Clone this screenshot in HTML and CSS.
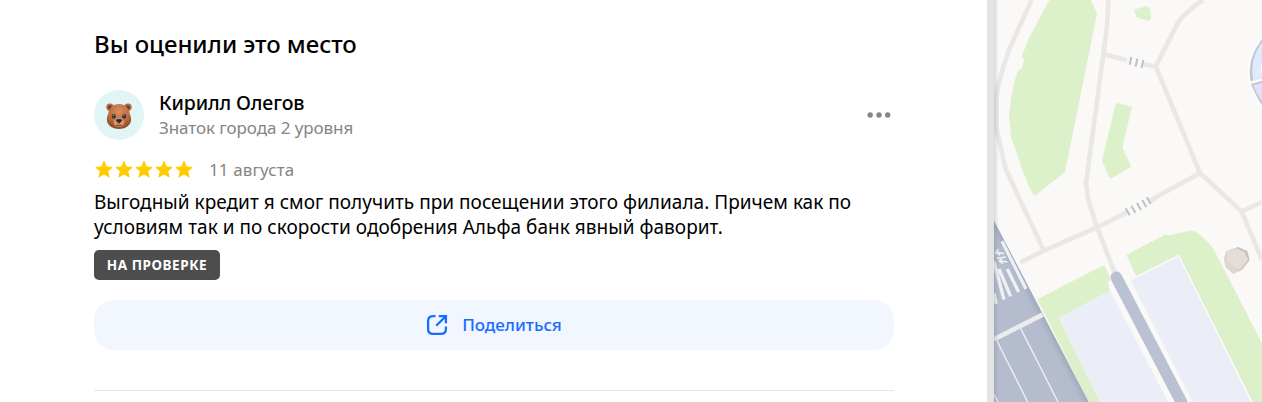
FILE: index.html
```html
<!DOCTYPE html>
<html lang="ru">
<head>
<meta charset="utf-8">
<title>Отзыв</title>
<link rel="stylesheet" href="styles.css">
</head>
<body>
<div class="app">
  <main class="panel">
    <section class="review">
      <h2 class="title">Вы оценили это место</h2>
      <header class="author">
        <div class="avatar">
          <svg width="28" height="28" viewBox="0 0 28 28">
            <defs>
              <radialGradient id="fur" cx=".5" cy=".3" r=".7"><stop offset="0" stop-color="#d8905c"/><stop offset=".6" stop-color="#bd6d40"/><stop offset="1" stop-color="#8b4526"/></radialGradient>
            </defs>
            <circle cx="5" cy="5.2" r="3.7" fill="#b56b40"/><circle cx="23" cy="5.2" r="3.7" fill="#b56b40"/>
            <circle cx="5.200" cy="5.500" r="1.900" fill="#6d3520"/><circle cx="22.800" cy="5.500" r="1.900" fill="#6d3520"/>
            <path d="M14 2C20 2 24 5.500 24.500 11C25.500 14 26.500 16 26 19C25 24 19.500 27 14 27C8.500 27 3 24 2 19C1.500 16 2.500 14 3.500 11C4 5.500 8 2 14 2Z" fill="url(#fur)"/>
            <ellipse cx="14" cy="20.500" rx="5.200" ry="4.600" fill="#d39a73"/>
            <ellipse cx="8.800" cy="14.200" rx="2" ry="2.500" fill="#38383b"/><ellipse cx="19.200" cy="14.200" rx="2" ry="2.500" fill="#38383b"/>
            <circle cx="8.600" cy="13.300" r=".7" fill="#a4a4a4"/><circle cx="19" cy="13.300" r=".7" fill="#a4a4a4"/>
            <path d="M10.800 17.800Q14 16 17.200 17.800Q16.800 20.500 14 21Q11.200 20.500 10.800 17.800Z" fill="#302522"/>
            <path d="M14 20.500V22.500M10.800 23Q14 24.800 17.200 23" fill="none" stroke="#713a29" stroke-width="1"/>
          </svg>
        </div>
        <div class="who">
          <div class="name">Кирилл Олегов</div>
          <div class="level">Знаток города 2 уровня</div>
        </div>
        <svg class="more" width="24" height="8" viewBox="0 0 24 8" fill="#858585"><circle cx="3.200" cy="4" r="2.700"/><circle cx="12" cy="4" r="2.700"/><circle cx="20.700" cy="4" r="2.700"/></svg>
      </header>
      <div class="meta">
        <svg width="100" height="20" viewBox="0 0 100 20" fill="#fc0" stroke="#fc0" stroke-linejoin="round">
          <defs><path id="star" d="M10 2.300L12.300 7.900L18.200 8.400L13.700 12.200L15.100 18L10 14.900L4.900 18L6.300 12.200L1.800 8.400L7.700 7.900Z"/></defs>
          <use href="#star"/><use href="#star" x="20"/><use href="#star" x="40"/><use href="#star" x="60"/><use href="#star" x="80"/>
        </svg>
        <span class="date">11 августа</span>
      </div>
      <p class="text"><span class="line first">Выгодный кредит я смог получить при посещении этого филиала. Причем как по</span> <span class="line second">условиям так и по скорости одобрения Альфа банк явный фаворит.</span></p>
      <div class="status"><span>НА ПРОВЕРКЕ</span></div>
      <button class="share">
        <svg width="22" height="22" viewBox="0 0 22 22" fill="none" stroke="#196dff" stroke-width="2.300"><path d="M9.500 2.100H7Q2.100 2.100 2.100 7V15Q2.100 19.900 7 19.900H15Q19.900 19.900 19.900 15V12.500M10.200 11.800L19.300 2.700M12.800 2.100H19.900V9.300"/></svg>
        <span>Поделиться</span>
      </button>
    </section>
  </main>
  <aside class="map">
    <svg width="268" height="402" viewBox="42 0 804 1206">
      <defs>
        <linearGradient id="edge"><stop offset="0" stop-color="#59606d" stop-opacity=".2"/><stop offset="1" stop-color="#59606d" stop-opacity="0"/></linearGradient>
        <filter id="soft" x="-50%" y="-10%" width="200%" height="120%"><feGaussianBlur stdDeviation="8"/></filter>
        <clipPath id="roadArea"><path d="M42 662L326 1206H42Z"/></clipPath>
      </defs>
      <path d="M42 0H846V1206H42Z" fill="#faf9f7"/>
      <g fill="#dcf1c9">
        <path d="M208 0H333L351 42L255 516L164 588Q155 583 128 512L93 410L87 350Q96 255 114 214L126 203L132 180L126 168L144 120Z"/>
        <path d="M462 28L484 23Q502 14 510 24L513 54L506 64L469 51Z"/>
        <path d="M408 308L456 320L427 443L454 500L396 534H388L366 481Z"/>
        <path d="M172 898L365 798L375 799L392 838L383 850L391 872L236 954L360 1206H326Z"/>
        <path d="M439 764L555 704L567 706L625 693Q643 690 658 702Q690 730 706 757L846 1030V1206H816L596 766L468 828Z"/>
      </g>
      <g fill="none" stroke="#e9e8e6" stroke-width="14" stroke-linejoin="round">
        <path d="M155 0L87 149Q49 260 49 300V385L77 507L120 600L192 752"/>
        <path d="M385 0L383 45Q382 80 370 162L318 550L325 600L351 682L409 830"/>
        <path d="M370 162L441 181M492 193L527 199L594 68Q622 30 670 0"/>
        <path d="M527 199L660 519L513 600M660 519L748 600L785 635L846 606M785 635L846 780"/>
        <path d="M120 788L192 752L351 682L440 637M510 603L525 596"/>
      </g>
      <g stroke="#bcc1c5" stroke-width="6"><path d="M454 171L449 194M472 176L467 200M490 180L485 204M437 625L449 646M454 617L466 638M471 609L483 630M487 600L499 622M501 592L512 612"/></g>
      <path d="M236 954L391 872L565 1206H360ZM451 840L596 768L812 1206H638Z" fill="#ebeef7"/>
      <path d="M451 840L596 766L816 1206" fill="none" stroke="#fafbf6" stroke-width="4"/>
      <path d="M383 850L391 872L565 1206H638L451 840L430 808" fill="#faf9f7"/>
      <path d="M409 832L604 1206" stroke="#b9c1d2" stroke-width="35" stroke-linecap="round"/>
      <path d="M42 662L326 1206H42Z" fill="#b5bccd"/>
      <g clip-path="url(#roadArea)">
        <path d="M42 662L326 1206" stroke="#929cb2" stroke-width="18" opacity=".65" filter="url(#soft)"/>
        <path d="M42 1018L188 944" stroke="#ececef" stroke-width="14"/>
        <g stroke="#f0f1f3" stroke-width="4"><path d="M51 1023L143 1206M122 985L234 1206M42 1183L54 1206"/></g>
        <g stroke="#eff0f2" stroke-width="10" fill="none"><path d="M66 724L138 867M82 807L116 876M57 807L92 889M42 785L72 899M42 880L49 912"/>
          <path d="M48 757L73 761M55 748L48 758L60 765M51 775L78 771M56 782L82 786M65 775L59 784L69 791" stroke-width="5"/></g>
      </g>
      <path d="M739 754L774 741L802 753L809 780L786 809L760 821L738 802L732 777Z" fill="#c9c1bd"/>
      <path d="M739 754L769 745L794 757L804 779L782 807L760 819L738 802L732 777Z" fill="#e5dcd8"/>
      <path d="M738 754L744 787L780 808L760 821L738 802L732 777Z" fill="#dfd6d2"/>
      <path d="M846 111L822 146Q806 175 804 210Q803 235 809 252Q820 286 846 326Z" fill="#fff"/>
      <path d="M846 116L826 148Q811 175 809 210Q808 235 813 252Q824 282 846 317Z" fill="#c5c8d3"/>
      <path d="M846 127L832 150Q818 178 817 210L819 242L846 235Z" fill="#dfebfc"/>
      <path d="M820 256L846 249V304Q828 280 820 256Z" fill="#e5def8"/>
      <path d="M808 249L846 239" stroke="#fff" stroke-width="7"/>
      <path d="M846 192V223Q838 207 846 192Z" fill="#fff"/>
      <rect x="42" width="15" height="1206" fill="url(#edge)"/>
    </svg>
  </aside>
</div>
</body>
</html>
```
FILE: styles.css
```css
* { box-sizing: border-box; }
body { margin: 0; overflow: hidden; background: #fff; color: #000; font-family: "Noto Sans", sans-serif; }
.app { display: flex; width: 1262px; height: 402px; }
.panel { width: 994px; padding: 27px 93px 0 94px; border-right: 7px solid #e3e3e3; }
.review { width: 800px; height: 364px; border-bottom: 1px solid #e8e8e8; }
.title { margin: 0; height: 63px; font-size: 24px; line-height: 34px; font-weight: 500; letter-spacing: -.05px; white-space: nowrap; }
.author { display: flex; height: 50px; align-items: center; }
.avatar { display: flex; width: 50px; height: 50px; align-items: center; justify-content: center; border-radius: 50%; background: #e0f5f4; }
.avatar svg { margin-top: 1px; }
.who { flex: 1; margin-left: 15px; white-space: nowrap; }
.name { font-size: 19.5px; line-height: 25px; font-weight: 500; letter-spacing: -.1px; }
.level { font-size: 17px; line-height: 25px; letter-spacing: -.07px; color: #858585; }
.more { margin-right: 3px; }
.meta { display: flex; height: 24px; margin-top: 17px; align-items: center; }
.date { margin-left: 15px; font-size: 17px; letter-spacing: .1px; color: #858585; }
.text { margin: 9px 0 0; font-size: 19px; line-height: 25px; white-space: nowrap; }
.line { display: block; width: max-content; }
.first { letter-spacing: .02px; }
.second { letter-spacing: .03px; }
.status { display: flex; width: 126px; height: 30px; margin-top: 10px; padding-bottom: 1px; align-items: center; justify-content: center; border-radius: 5px; background: #4d4d4d; color: #fff; font-size: 13.5px; font-weight: 700; letter-spacing: .55px; }
.share { display: flex; width: 800px; height: 50px; margin: 20px 0 0; padding: 0; gap: 14px; align-items: center; justify-content: center; border: 0; border-radius: 20px; background: #f2f6ff; color: #196dff; font: 500 17px "Noto Sans", sans-serif; }
.share span { padding-bottom: 2px; }
.map { width: 268px; height: 402px; }
.map svg { display: block; }
```
